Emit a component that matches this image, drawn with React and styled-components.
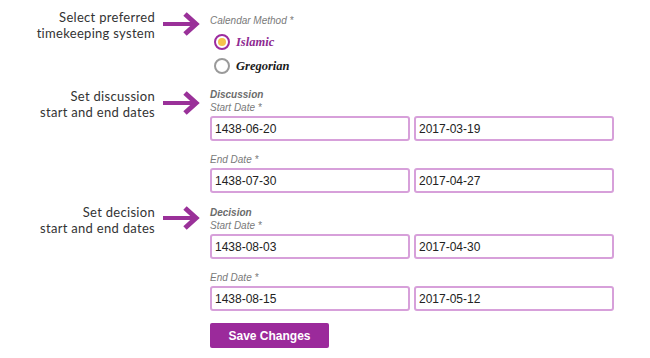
import React from "react";
import styled, { createGlobalStyle } from "styled-components";

const GlobalStyle = createGlobalStyle`
  html, body {
    margin: 0;
    padding: 0;
    background: #ffffff;
  }
  body {
    font-family: "Liberation Sans", Arial, sans-serif;
  }
`;

const Page = styled.div`
  width: 650px;
  height: 358px;
  box-sizing: border-box;
  padding-top: 14px;
  overflow: hidden;
`;

const Section = styled.div`
  display: grid;
  grid-template-columns: 155px 37px 1fr;
  column-gap: 8px;
  margin-top: ${props => props.gap || 0}px;
  & > :last-child {
    margin-left: 2px;
  }
`;

const Note = styled.div`
  text-align: right;
  font-family: "Lato", "Noto Sans", sans-serif;
  font-size: 13px;
  line-height: 16px;
  letter-spacing: 0.3px;
  color: #333333;
  margin-top: ${props => props.shift || 0}px;
`;

const ArrowBox = styled.div`
  margin-top: ${props => props.shift || 0}px;
  height: 24px;
`;

const Fields = styled.div`
  display: flex;
  flex-direction: column;
  align-items: flex-start;
`;

const Heading = styled.div`
  font-size: 10px;
  line-height: 13px;
  font-style: italic;
  font-weight: bold;
  color: #6b6b6b;
`;

const Label = styled.div`
  font-size: 10px;
  line-height: 13px;
  font-style: italic;
  color: #7a7a7a;
`;

const RadioList = styled.div`
  margin-top: 3px;
  display: flex;
  flex-direction: column;
`;

const RadioRow = styled.label`
  display: flex;
  align-items: center;
  height: 24px;
  gap: 6px;
  margin-left: 4px;
`;

const RadioCircle = styled.span`
  width: 16px;
  height: 16px;
  box-sizing: border-box;
  border-radius: 50%;
  border: 2px solid ${props => (props.checked ? "#9c2c9f" : "#9a9a9a")};
  display: flex;
  align-items: center;
  justify-content: center;
  background: #fff;
  &::after {
    content: "";
    display: ${props => (props.checked ? "block" : "none")};
    width: 8px;
    height: 8px;
    border-radius: 50%;
    background: #f5c34c;
  }
`;

const RadioText = styled.span`
  font-family: "Liberation Serif", "Times New Roman", serif;
  font-size: 12.5px;
  font-weight: bold;
  font-style: italic;
  color: ${props => (props.checked ? "#8e2a91" : "#1a1a1a")};
`;

const Field = styled.div`
  margin-bottom: 12px;
`;

const InputRow = styled.div`
  display: flex;
  gap: 4px;
  margin-top: 2px;
`;

const DateInput = styled.input`
  width: 200px;
  height: 25px;
  box-sizing: border-box;
  border: 2px solid #d7a0da;
  border-radius: 3px;
  padding: 0 3px;
  font-family: "Liberation Sans", Arial, sans-serif;
  font-size: 12px;
  color: #222;
  background: #fff;
  outline: none;
`;

const SaveButton = styled.button`
  width: 119px;
  height: 25px;
  border: none;
  border-radius: 2px;
  background: #9b2a9b;
  color: #fff;
  font-family: "Liberation Sans", Arial, sans-serif;
  font-size: 12px;
  font-weight: bold;
  cursor: pointer;
`;

const Arrow = () => (
  <svg width="37" height="24" viewBox="0 0 37 24">
    <line x1="0" y1="12" x2="32" y2="12" stroke="#9a3199" strokeWidth="4" />
    <polyline
      points="22,2 33,12 22,22"
      fill="none"
      stroke="#9a3199"
      strokeWidth="5"
    />
  </svg>
);

const Radio = ({ checked, children }) => (
  <RadioRow>
    <RadioCircle checked={checked} />
    <RadioText checked={checked}>{children}</RadioText>
  </RadioRow>
);

const DateField = ({ label, hijri, gregorian }) => (
  <Field>
    <Label>{label}</Label>
    <InputRow>
      <DateInput defaultValue={hijri} />
      <DateInput defaultValue={gregorian} />
    </InputRow>
  </Field>
);

export default function App() {
  return (
    <Page>
      <GlobalStyle />
      <Section>
        <Note shift={-5}>
          Select preferred
          <br />
          timekeeping system
        </Note>
        <ArrowBox shift={-2}>
          <Arrow />
        </ArrowBox>
        <Fields>
          <Label>Calendar Method *</Label>
          <RadioList>
            <Radio checked>Islamic</Radio>
            <Radio>Gregorian</Radio>
          </RadioList>
        </Fields>
      </Section>

      <Section gap={10}>
        <Note shift={0}>
          Set discussion
          <br />
          start and end dates
        </Note>
        <ArrowBox shift={3}>
          <Arrow />
        </ArrowBox>
        <Fields>
          <Heading>Discussion</Heading>
          <DateField label="Start Date *" hijri="1438-06-20" gregorian="2017-03-19" />
          <DateField label="End Date *" hijri="1438-07-30" gregorian="2017-04-27" />
        </Fields>
      </Section>

      <Section gap={1}>
        <Note shift={-2}>
          Set decision
          <br />
          start and end dates
        </Note>
        <ArrowBox>
          <Arrow />
        </ArrowBox>
        <Fields>
          <Heading>Decision</Heading>
          <DateField label="Start Date *" hijri="1438-08-03" gregorian="2017-04-30" />
          <DateField label="End Date *" hijri="1438-08-15" gregorian="2017-05-12" />
          <SaveButton>Save Changes</SaveButton>
        </Fields>
      </Section>
    </Page>
  );
}
